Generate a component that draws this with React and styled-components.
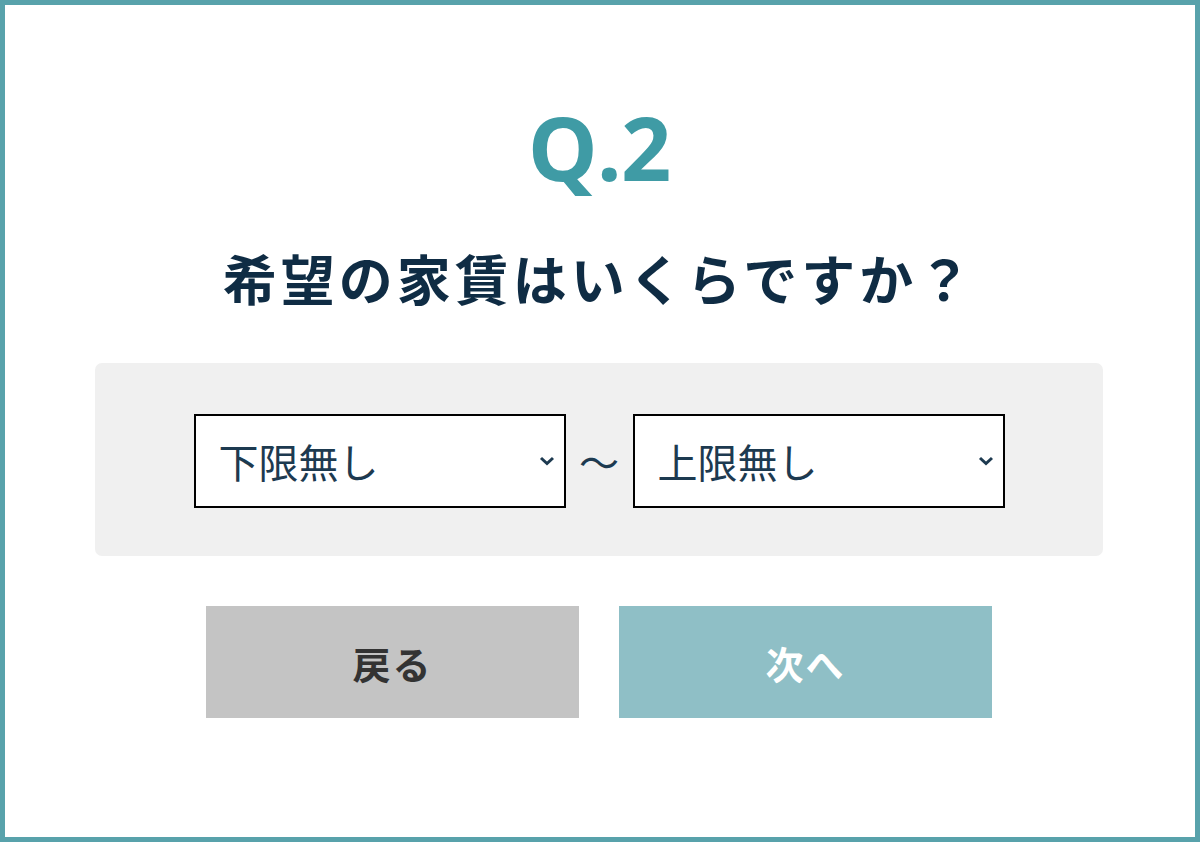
import { useState } from "react";
import styled, { createGlobalStyle } from "styled-components";

const GlobalStyle = createGlobalStyle`
  html, body {
    margin: 0;
    padding: 0;
    background: #fff;
  }
  body {
    font-family: "Noto Sans CJK JP", "Noto Sans", sans-serif;
  }
`;

const Frame = styled.div`
  box-sizing: border-box;
  width: 1200px;
  height: 842px;
  border: 5px solid #58a2ab;
  display: flex;
  flex-direction: column;
  align-items: center;
  padding: 98px 2px 0 0;
`;

const QLabel = styled.div`
  font-family: "Open Sans", "Noto Sans", sans-serif;
  font-weight: 700;
  font-size: 88px;
  line-height: 1;
  color: #3f9ba5;
  letter-spacing: -1px;
`;

const Title = styled.h2`
  margin: 60px 0 0;
  font-family: "Noto Sans CJK JP", sans-serif;
  font-weight: 700;
  font-size: 54px;
  line-height: 1;
  letter-spacing: 4px;
  color: #0f2c44;
`;

const Panel = styled.div`
  box-sizing: border-box;
  width: 1008px;
  height: 193px;
  margin-top: 58px;
  background: #f0f0f0;
  border-radius: 7px;
  display: flex;
  align-items: center;
  justify-content: center;
  padding-top: 2px;
`;

const SelectWrap = styled.div`
  position: relative;
  width: 372px;
  height: 94px;
`;

const Select = styled.select`
  appearance: none;
  box-sizing: border-box;
  width: 100%;
  height: 100%;
  border: 2px solid #000;
  border-radius: 0;
  background: #fff;
  padding: 0 0 0 23px;
  font-family: "Noto Sans CJK JP", sans-serif;
  font-size: 40px;
  color: #1d3a50;
  outline: none;
`;

const Chevron = styled.svg`
  position: absolute;
  right: 10px;
  top: 41px;
  pointer-events: none;
`;

const Tilde = styled.span`
  width: 67px;
  text-align: center;
  font-family: "Noto Sans CJK JP", sans-serif;
  font-size: 40px;
  color: #1d3a50;
  line-height: 1;
`;

const Buttons = styled.div`
  display: flex;
  gap: 40px;
  margin-top: 50px;
`;

const Button = styled.button`
  width: 373px;
  height: 112px;
  border: none;
  border-radius: 0;
  background: ${(p) => (p.$primary ? "#8fbfc6" : "#c4c4c4")};
  color: ${(p) => (p.$primary ? "#fff" : "#333")};
  font-family: "Noto Sans CJK JP", sans-serif;
  font-weight: 700;
  font-size: 38px;
  letter-spacing: 2px;
  cursor: pointer;
`;

const lowerOptions = ["下限無し", "3万円", "4万円", "5万円", "6万円", "7万円"];
const upperOptions = ["上限無し", "5万円", "6万円", "7万円", "8万円", "10万円"];

const RangeSelect = ({ value, options, onChange }) => (
  <SelectWrap>
    <Select value={value} onChange={(e) => onChange(e.target.value)}>
      {options.map((o) => (
        <option key={o} value={o}>{o}</option>
      ))}
    </Select>
    <Chevron width="18" height="12" viewBox="0 0 18 12">
      <path d="M3 3 L9 8.5 L15 3" fill="none" stroke="#1d3a50" strokeWidth="3" strokeLinecap="butt" />
    </Chevron>
  </SelectWrap>
);

export default function App() {
  const [lower, setLower] = useState(lowerOptions[0]);
  const [upper, setUpper] = useState(upperOptions[0]);

  return (
    <>
      <GlobalStyle />
      <Frame>
        <QLabel>Q.2</QLabel>
        <Title>希望の家賃はいくらですか？</Title>
        <Panel>
          <RangeSelect value={lower} options={lowerOptions} onChange={setLower} />
          <Tilde>〜</Tilde>
          <RangeSelect value={upper} options={upperOptions} onChange={setUpper} />
        </Panel>
        <Buttons>
          <Button>戻る</Button>
          <Button $primary>次へ</Button>
        </Buttons>
      </Frame>
    </>
  );
}
